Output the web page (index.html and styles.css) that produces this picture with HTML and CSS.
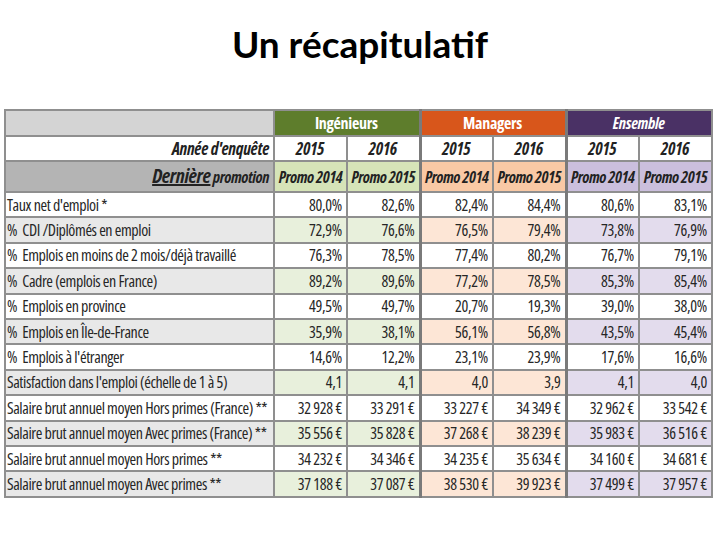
FILE: index.html
```html
<!DOCTYPE html>
<html lang="fr">
<head>
<meta charset="utf-8">
<link rel="stylesheet" href="styles.css">
</head>
<body>
<h1 class="title">Un récapitulatif</h1>
<table class="recap">
  <colgroup>
    <col class="c-label"><col class="c-num"><col class="c-num"><col class="c-num"><col class="c-num"><col class="c-num"><col class="c-num">
  </colgroup>
  <tr class="r-group">
    <th class="lbl-blank"></th>
    <th colspan="2" class="g-ing sep">Ingénieurs</th>
    <th colspan="2" class="g-man sep">Managers</th>
    <th colspan="2" class="g-ens"><em>Ensemble</em></th>
  </tr>
  <tr class="r-year">
    <th class="lbl-year">Année d'enquête</th>
    <th>2015</th><th class="sep">2016</th>
    <th>2015</th><th class="sep">2016</th>
    <th>2015</th><th>2016</th>
  </tr>
  <tr class="r-promo">
    <th class="lbl-promo"><span class="big">Dernière</span> promotion</th>
    <th class="ing">Promo 2014</th><th class="ing sep">Promo 2015</th>
    <th class="man">Promo 2014</th><th class="man sep">Promo 2015</th>
    <th class="ens">Promo 2014</th><th class="ens">Promo 2015</th>
  </tr>
  <tr><td class="lbl">Taux net d'emploi *</td><td>80,0%</td><td class="sep">82,6%</td><td>82,4%</td><td class="sep">84,4%</td><td>80,6%</td><td>83,1%</td></tr>
  <tr class="alt"><td class="lbl">%&nbsp; CDI /Diplômés en emploi</td><td>72,9%</td><td class="sep">76,6%</td><td>76,5%</td><td class="sep">79,4%</td><td>73,8%</td><td>76,9%</td></tr>
  <tr><td class="lbl">%&nbsp; Emplois en moins de 2 mois/déjà travaillé</td><td>76,3%</td><td class="sep">78,5%</td><td>77,4%</td><td class="sep">80,2%</td><td>76,7%</td><td>79,1%</td></tr>
  <tr class="alt"><td class="lbl">%&nbsp; Cadre (emplois en France)</td><td>89,2%</td><td class="sep">89,6%</td><td>77,2%</td><td class="sep">78,5%</td><td>85,3%</td><td>85,4%</td></tr>
  <tr><td class="lbl">%&nbsp; Emplois en province</td><td>49,5%</td><td class="sep">49,7%</td><td>20,7%</td><td class="sep">19,3%</td><td>39,0%</td><td>38,0%</td></tr>
  <tr class="alt"><td class="lbl">%&nbsp; Emplois en Île-de-France</td><td>35,9%</td><td class="sep">38,1%</td><td>56,1%</td><td class="sep">56,8%</td><td>43,5%</td><td>45,4%</td></tr>
  <tr><td class="lbl">%&nbsp; Emplois à l'étranger</td><td>14,6%</td><td class="sep">12,2%</td><td>23,1%</td><td class="sep">23,9%</td><td>17,6%</td><td>16,6%</td></tr>
  <tr class="alt"><td class="lbl">Satisfaction dans l'emploi (échelle de 1 à 5)</td><td>4,1</td><td class="sep">4,1</td><td>4,0</td><td class="sep">3,9</td><td>4,1</td><td>4,0</td></tr>
  <tr><td class="lbl">Salaire brut annuel moyen Hors primes (France) **</td><td>32 928 €</td><td class="sep">33 291 €</td><td>33 227 €</td><td class="sep">34 349 €</td><td>32 962 €</td><td>33 542 €</td></tr>
  <tr class="alt"><td class="lbl">Salaire brut annuel moyen Avec primes (France) **</td><td>35 556 €</td><td class="sep">35 828 €</td><td>37 268 €</td><td class="sep">38 239 €</td><td>35 983 €</td><td>36 516 €</td></tr>
  <tr><td class="lbl">Salaire brut annuel moyen Hors primes **</td><td>34 232 €</td><td class="sep">34 346 €</td><td>34 235 €</td><td class="sep">35 634 €</td><td>34 160 €</td><td>34 681 €</td></tr>
  <tr class="alt"><td class="lbl">Salaire brut annuel moyen Avec primes **</td><td>37 188 €</td><td class="sep">37 087 €</td><td>38 530 €</td><td class="sep">39 923 €</td><td>37 499 €</td><td>37 957 €</td></tr>
</table>
</body>
</html>
```

FILE: styles.css
```css
html, body {
  margin: 0;
  padding: 0;
  background: #ffffff;
}

.title {
  margin: 0;
  height: 109px;
  padding-top: 22px;
  box-sizing: border-box;
  text-align: center;
  font-family: "Lato", "Open Sans", sans-serif;
  font-weight: 700;
  font-size: 37px;
  line-height: 44px;
  color: #000;
}

.recap {
  margin-left: 4px;
  border-collapse: collapse;
  table-layout: fixed;
  width: 708px;
  font-family: "Open Sans", "Liberation Sans", sans-serif;
  font-stretch: 75%;
  font-size: 16px;
  color: #262626;
}

.c-label { width: 269px; }
.c-num { width: 73px; }

.recap th,
.recap td {
  border: 2px solid #8f8f8f;
  padding: 0 4px 0 3px;
  white-space: nowrap;
  overflow: hidden;
}

.recap td {
  height: 23.4px;
  text-align: right;
  letter-spacing: -0.3px;
}

.recap td.lbl {
  text-align: left;
  letter-spacing: -0.4px;
  padding-left: 1px;
}

.recap .sep { border-right: 3px solid #7a7a7a; }

/* header rows */
.r-group th {
  height: 24px;
  font-size: 16px;
  font-weight: 700;
  color: #fff;
  text-align: center;
  letter-spacing: -0.3px;
}
.lbl-blank { background: #d4d4d4; }
.g-ing { background: #5e7d2c; }
.g-man { background: #d8561b; }
.g-ens { background: #4a3165; }
.g-ens em { font-style: italic; }

.r-year th {
  height: 23px;
  background: #fff;
  font-style: italic;
  font-weight: 700;
  font-size: 17px;
  text-align: center;
  color: #222;
  letter-spacing: -0.3px;
}
.r-year th.lbl-year { text-align: right; padding-right: 4px; }

.r-promo th {
  height: 27px;
  font-style: italic;
  font-weight: 700;
  font-size: 16px;
  color: #222;
  text-align: center;
  letter-spacing: -0.4px;
  padding: 0 1px;
}
.r-promo th.lbl-promo {
  background: #b4b4b4;
  text-align: right;
  padding-right: 4px;
  vertical-align: bottom;
  padding-bottom: 2px;
}
.lbl-promo .big {
  font-size: 20px;
  text-decoration: underline;
}
.r-promo .ing { background: #d6e4b8; }
.r-promo .man { background: #f9c9a5; }
.r-promo .ens { background: #cbbfdd; }

/* data rows */
.recap tr.alt td.lbl { background: #e8e8e8; }
.recap tr.alt td:nth-child(2),
.recap tr.alt td:nth-child(3) { background: #e8f0dc; }
.recap tr.alt td:nth-child(4),
.recap tr.alt td:nth-child(5) { background: #fde6d6; }
.recap tr.alt td:nth-child(6),
.recap tr.alt td:nth-child(7) { background: #e3dced; }
```
